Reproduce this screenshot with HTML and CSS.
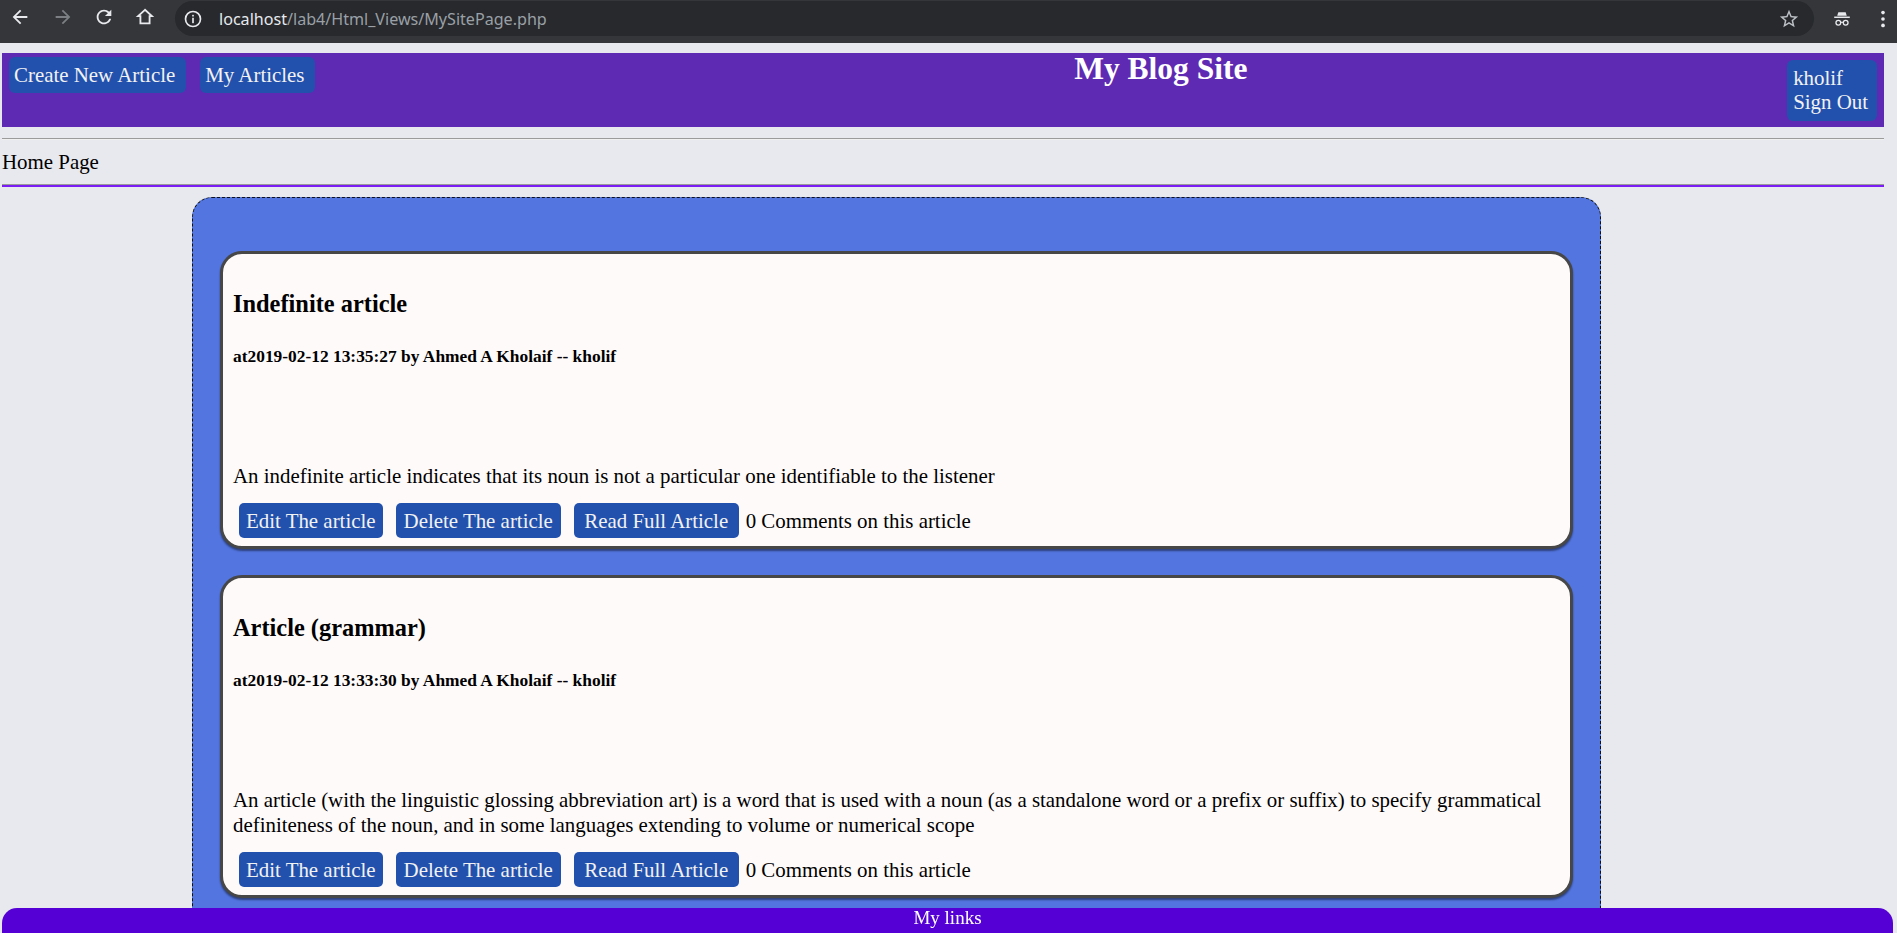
FILE: index.html
```html
<!DOCTYPE html>
<html lang="en">
<head>
<meta charset="utf-8">
<title>My Blog Site</title>
<link rel="stylesheet" href="styles.css">
</head>
<body>
<div class="toolbar">
  <span class="tb-icon tb-back"><svg viewBox="0 0 24 24" width="22" height="22"><path fill="#e8eaed" d="M20 11H7.83l5.59-5.59L12 4l-8 8 8 8 1.41-1.41L7.83 13H20v-2z"/></svg></span>
  <span class="tb-icon tb-fwd"><svg viewBox="0 0 24 24" width="22" height="22"><path fill="#7c7f83" d="M12 4l-1.41 1.41L16.17 11H4v2h12.17l-5.58 5.59L12 20l8-8z"/></svg></span>
  <span class="tb-icon tb-reload"><svg viewBox="0 0 24 24" width="22" height="22"><path fill="#e8eaed" d="M17.65 6.35C16.2 4.9 14.21 4 12 4c-4.42 0-7.99 3.58-7.99 8s3.57 8 7.99 8c3.73 0 6.84-2.55 7.73-6h-2.08c-.82 2.330-3.04 4-5.65 4-3.31 0-6-2.69-6-6s2.69-6 6-6c1.66 0 3.14.69 4.22 1.78L13 11h7V4l-2.35 2.35z"/></svg></span>
  <span class="tb-icon tb-home"><svg viewBox="0 0 24 24" width="22" height="22"><path fill="none" stroke="#e8eaed" stroke-width="2" stroke-linejoin="miter" d="M12 4.2 4.5 11H7v8h10v-8h2.5z"/></svg></span>
  <div class="omnibox">
    <span class="ob-info"><svg viewBox="0 0 24 24" width="20" height="20"><circle cx="12" cy="12" r="9" fill="none" stroke="#e8eaed" stroke-width="2"/><rect x="11" y="10.5" width="2" height="6.5" fill="#e8eaed"/><rect x="11" y="7" width="2" height="2" fill="#e8eaed"/></svg></span>
    <span class="url"><span class="url-host">localhost</span>/lab4/Html_Views/MySitePage.php</span>
    <span class="ob-star"><svg viewBox="0 0 24 24" width="22" height="22"><path fill="#bdc1c6" d="M22 9.24l-7.19-.62L12 2 9.19 8.63 2 9.24l5.46 4.73L5.82 21 12 17.27 18.18 21l-1.63-7.03L22 9.24zM12 15.4l-3.76 2.27 1-4.28-3.32-2.88 4.38-.38L12 6.1l1.71 4.04 4.38.38-3.32 2.88 1 4.28L12 15.4z"/></svg></span>
  </div>
  <span class="tb-icon tb-incog"><svg viewBox="0 0 24 24" width="22" height="22"><path fill="#e8eaed" d="M8 4.5h8l1.2 4H6.8z"/><rect x="3.5" y="9.3" width="17" height="1.6" fill="#e8eaed"/><circle cx="8" cy="16" r="2.6" fill="none" stroke="#e8eaed" stroke-width="1.4"/><circle cx="16" cy="16" r="2.6" fill="none" stroke="#e8eaed" stroke-width="1.4"/><path d="M10.6 15.6h2.8" stroke="#e8eaed" stroke-width="1.2"/></svg></span>
  <span class="tb-icon tb-menu"><svg viewBox="0 0 24 24" width="22" height="22"><circle cx="12" cy="5" r="2" fill="#e8eaed"/><circle cx="12" cy="12" r="2" fill="#e8eaed"/><circle cx="12" cy="19" r="2" fill="#e8eaed"/></svg></span>
</div>

<div class="viewport">
  <header class="site-header">
    <nav class="nav-left">
      <a class="btn btn-nav" href="#">Create New Article</a>
      <a class="btn btn-nav" href="#">My Articles</a>
    </nav>
    <h1 class="site-title">My Blog Site</h1>
    <a class="btn btn-user" href="#">kholif<br>Sign Out</a>
  </header>
  <hr class="rule-gray">
  <div class="crumb">Home Page</div>
  <div class="rule-purple"></div>

  <main class="articles">
    <article class="card">
      <h3 class="card-title">Indefinite article</h3>
      <h5 class="card-meta">at2019-02-12 13:35:27 by Ahmed A Kholaif -- kholif</h5>
      <p class="card-body">An indefinite article indicates that its noun is not a particular one identifiable to the listener</p>
      <div class="card-actions">
        <a class="btn btn-sm btn-edit" href="#">Edit The article</a>
        <a class="btn btn-sm btn-del" href="#">Delete The article</a>
        <a class="btn btn-sm btn-read" href="#">Read Full Article</a>
        <span class="comments">0 Comments on this article</span>
      </div>
    </article>
    <article class="card">
      <h3 class="card-title">Article (grammar)</h3>
      <h5 class="card-meta">at2019-02-12 13:33:30 by Ahmed A Kholaif -- kholif</h5>
      <p class="card-body">An article (with the linguistic glossing abbreviation art) is a word that is used with a noun (as a standalone word or a prefix or suffix) to specify grammatical definiteness of the noun, and in some languages extending to volume or numerical scope</p>
      <div class="card-actions">
        <a class="btn btn-sm btn-edit" href="#">Edit The article</a>
        <a class="btn btn-sm btn-del" href="#">Delete The article</a>
        <a class="btn btn-sm btn-read" href="#">Read Full Article</a>
        <span class="comments">0 Comments on this article</span>
      </div>
    </article>
  </main>

  <footer class="links">My links</footer>
</div>
</body>
</html>
```

FILE: styles.css
```css
* { box-sizing: border-box; }

html, body {
  margin: 0;
  padding: 0;
  height: 933px;
  overflow: hidden;
}

body {
  font-family: "Liberation Serif", "Times New Roman", serif;
  font-size: 20.9px;
  color: #000;
  background: #e8e9ee;
}

/* ---------- browser toolbar ---------- */
.toolbar {
  height: 43px;
  background: #35363a;
  display: flex;
  align-items: flex-start;
  padding-top: 1px;
}

.tb-icon {
  width: 24px;
  height: 32px;
  display: flex;
  align-items: center;
  justify-content: center;
  flex: 0 0 auto;
}

.tb-back { margin-left: 8px; }
.tb-fwd { margin-left: 19px; }
.tb-reload { margin-left: 17px; }
.tb-home { margin-left: 17px; }

.omnibox {
  margin-left: 18px;
  width: 1639px;
  height: 35px;
  border-radius: 18px;
  background: #27292d;
  display: flex;
  align-items: center;
  padding-left: 8px;
  padding-right: 14px;
}

.ob-info {
  width: 20px;
  height: 20px;
  display: flex;
}

.url {
  margin-left: 16px;
  font-family: "Noto Sans", "DejaVu Sans", sans-serif;
  font-size: 16.1px;
  color: #9aa0a6;
  flex: 1;
  white-space: nowrap;
}

.url-host { color: #e8eaed; }

.ob-star {
  width: 22px;
  height: 22px;
  display: flex;
}

.tb-incog { margin-left: 16px; height: 35px; }
.tb-menu { margin-left: 17px; height: 35px; }

/* ---------- page viewport ---------- */
.viewport {
  height: 890px;
  overflow: hidden;
  padding: 10px 13px 0 2px;
  background: #e8e9ee;
}

.site-header {
  background: #5e2ab4;
  display: flex;
  align-items: flex-start;
  padding: 0 7px 6px 7px;
}

.nav-left {
  display: flex;
  gap: 14px;
  padding-top: 4px;
}

.btn {
  display: inline-block;
  background: #2251ad;
  color: #f2f2f2;
  text-decoration: none;
  font-size: 20.9px;
  line-height: 24px;
  padding: 6px 9px;
  border-radius: 6px;
  white-space: nowrap;
}

.btn-nav {
  padding-left: 5px;
  padding-right: 11px;
}

.site-title {
  flex: 1;
  margin: 0;
  padding-left: 219px;
  text-align: center;
  font-size: 31.5px;
  line-height: 32px;
  font-weight: bold;
  color: #fff;
}

.btn-user {
  margin-top: 7px;
  padding: 7px 9px 7px 6px;
  line-height: 23.5px;
}

.rule-gray {
  margin: 11px 0 0 0;
  border: 0;
  border-top: 1px solid #9b9b9b;
  border-bottom: 1px solid #f0f0f0;
  height: 0;
}

.crumb {
  margin-top: 11px;
  line-height: 23px;
}

.rule-purple {
  margin-top: 10px;
  border-top: 1px solid #9a9a9a;
  border-bottom: 2px solid #7a1cf4;
}

/* ---------- articles ---------- */
.articles {
  margin: 10px 0 0 190px;
  width: 1409px;
  background: #5275e0;
  border: 1px dashed #111;
  border-radius: 20px;
  padding: 53px 27px 20px 27px;
}

.card {
  background: #fffafa;
  border: 3px solid #474747;
  border-radius: 22px;
  box-shadow: 0 2px 2px rgba(0, 0, 0, 0.45);
  padding: 0 10px 8px 10px;
  margin-bottom: 26px;
}

.card-title {
  margin: 36px 0 0 0;
  font-size: 24.4px;
  line-height: 28px;
  font-weight: bold;
}

.card-meta {
  margin: 28px 0 0 0;
  font-size: 17.4px;
  line-height: 20px;
  font-weight: bold;
}

.card-body {
  margin: 98px 0 0 0;
  line-height: 25px;
}

.card-actions {
  margin-top: 14px;
  display: flex;
  align-items: center;
  padding-left: 6px;
}

.btn-sm {
  padding: 6px 7px 5px 7px;
  line-height: 24px;
  border-radius: 5px;
  margin-right: 13px;
}

.btn-edit { padding-left: 7px; padding-right: 7px; }
.btn-del { padding-left: 8px; padding-right: 8px; }
.btn-read { padding-left: 10.5px; padding-right: 10.5px; margin-right: 7px; }

.comments {
  line-height: 24px;
}

/* ---------- fixed footer ---------- */
.links {
  position: fixed;
  left: 2px;
  bottom: 0;
  width: 1891px;
  height: 25px;
  background: #5500d5;
  color: #fff;
  text-align: center;
  font-size: 19px;
  line-height: 19px;
  border-radius: 15px 15px 0 0;
}
```
